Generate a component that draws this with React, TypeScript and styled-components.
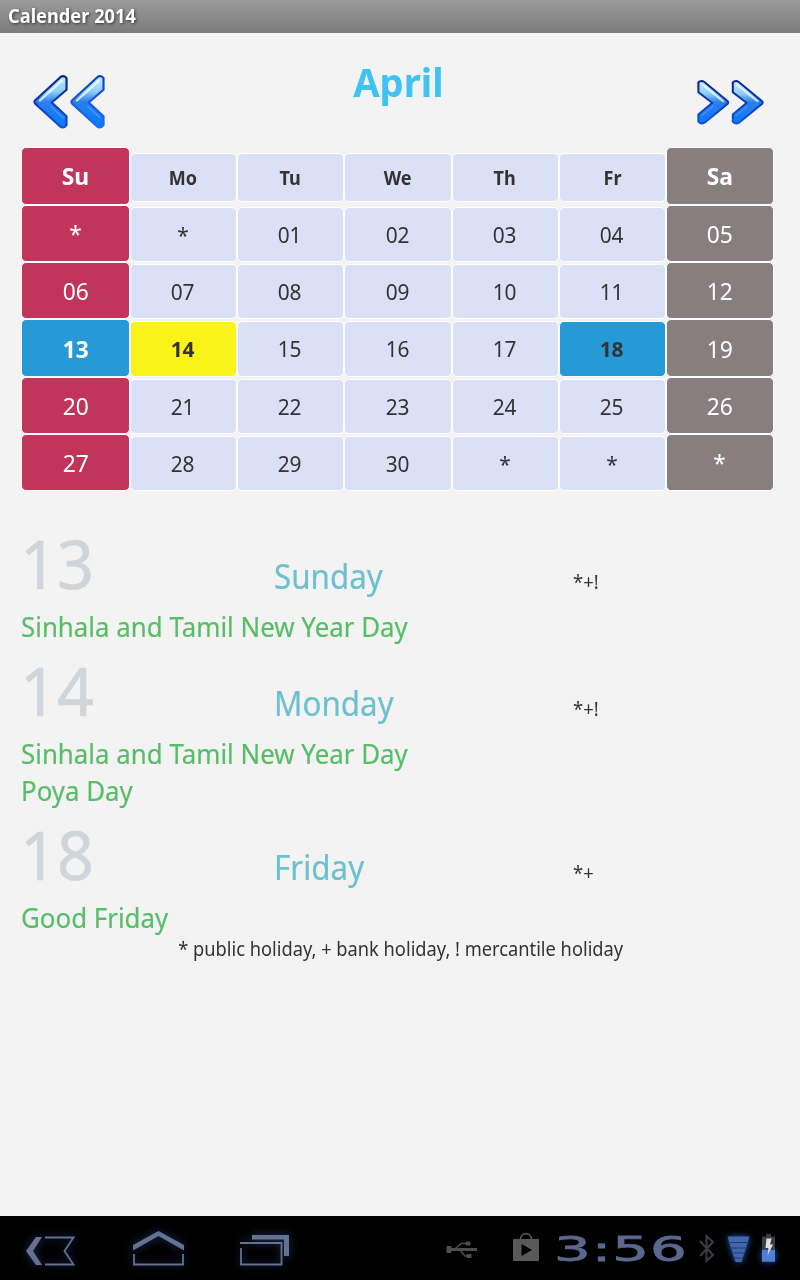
import React from "react";
import styled, { createGlobalStyle } from "styled-components";

const Global = createGlobalStyle`
  * { box-sizing: border-box; }
  body { margin: 0; background: #f3f3f3; font-family: "Noto Sans", "Open Sans", sans-serif; color: #333; }
`;

const Screen = styled.div`
  width: 800px;
  height: 1280px;
  display: flex;
  flex-direction: column;
  background: #f3f3f3;
  overflow: hidden;
`;

const TitleBar = styled.header`
  height: 33px;
  padding-left: 8px;
  line-height: 32px;
  font-size: 19px;
  font-weight: 700;
  color: #fff;
  text-shadow: 1px 1px 3px #333;
  background: linear-gradient(#9b9b9b, #7b7b7b);
`;

const Fit = styled.span<{ $x: number; $origin?: string }>`
  display: inline-block;
  white-space: nowrap;
  transform: scaleX(${(p) => p.$x});
  transform-origin: ${(p) => p.$origin ?? "left"} center;
`;

const MonthBar = styled.div`
  height: 114px;
  padding: 0 35px 0 33px;
  display: grid;
  grid-template-columns: 72px 1fr 68px;
`;

const MonthName = styled.h1`
  margin: 0;
  padding-right: 5px;
  text-align: center;
  font-size: 40px;
  line-height: 97px;
  font-weight: 700;
  color: #3fc3f5;
`;

const ArrowButton = styled.button<{ $top: number }>`
  border: 0;
  padding: ${(p) => p.$top}px 0 0;
  background: none;
  display: flex;
  align-items: flex-start;
`;

const Calendar = styled.div`
  margin-left: 21px;
  display: grid;
  grid-template-columns: 109px 107px 107px 108px 107px 107px 108px;
  grid-template-rows: 58px 57px 57px 58px 57px 57px;
`;

type Tone = "sun" | "week" | "sat" | "holiday" | "today";
const tones: Record<Tone, string> = {
  sun: "#c2355b",
  week: "#dae0f5",
  sat: "#887e80",
  holiday: "#259ad7",
  today: "#f9f31a",
};

const Cell = styled.div<{ $tone: Tone; $edge: boolean; $head: boolean }>`
  display: flex;
  align-items: center;
  justify-content: center;
  margin: ${(p) => (p.$edge ? "0" : p.$head ? "6px 0 3px" : "2px 0 0")};
  padding: ${(p) => (p.$edge ? (p.$head ? "0 0 2px" : "0") : p.$head ? "0 1px 0 0" : "0 1px 2px 0")};
  border: 1px solid #fff;
  border-radius: 5px;
  background: ${(p) => tones[p.$tone]};
  color: ${(p) => (p.$edge ? "#fff" : "#333")};
  font-size: ${(p) => (p.$edge ? 24 : p.$head ? 19 : 22)}px;
  font-weight: ${(p) => (p.$head || p.$tone === "holiday" || p.$tone === "today" ? 700 : 400)};
`;

const Events = styled.main`
  flex: 1;
  padding: 27px 21px 0;
`;

const EventHead = styled.div`
  height: 90px;
  display: grid;
  grid-template-columns: 253px 299px 1fr;
  align-items: baseline;
`;

const DayNumber = styled.span`
  margin-left: -1px;
  font-size: 68px;
  line-height: 90px;
  color: #d0d5da;
  -webkit-text-stroke: 0.7px #d0d5da;
`;

const DayName = styled.span`
  font-size: 34px;
  color: #6dc1cf;
  -webkit-text-stroke: 0.2px #6dc1cf;
`;

const Marks = styled.span`
  font-size: 20px;
`;

const Holiday = styled.div`
  height: 37px;
  line-height: 37px;
  font-size: 28px;
  color: #58bd67;
  -webkit-text-stroke: 0.2px #58bd67;
`;

const Legend = styled.div`
  padding-left: 1px;
  text-align: center;
  font-size: 20px;
  line-height: 26px;
`;

const SystemBar = styled.footer`
  height: 64px;
  background: #000;
  display: flex;
  align-items: center;
`;

const NavIcon = styled.svg`
  width: 107px;
  height: 64px;
  flex: none;
  filter: drop-shadow(0 0 4px #1c3568);
`;

const StatusArea = styled.div`
  margin-left: auto;
  display: flex;
  align-items: center;
  height: 64px;
`;

const StatusIcons = styled.svg`
  height: 64px;
  flex: none;
`;

const Glow = styled.g`
  filter: drop-shadow(0 0 3px #2458b8);
`;

const Clock = styled.div`
  width: 138px;
  margin-left: -2px;
  height: 64px;
  line-height: 66px;
  font-family: "DejaVu Sans", sans-serif;
  font-size: 34px;
  letter-spacing: 0.6px;
  color: #5a688f;
  -webkit-text-stroke: 0.8px #5a688f;
`;

function Chevrons({ dir }: { dir: "prev" | "next" }) {
  const prev = dir === "prev";
  const shape = "M28 2 Q31 0 34 3 V15 L19 28 L34 42 V51 Q31 55 27 52 L2 29 Q1 27 2 26 Z";
  const chevron = (line: string) => (
    <>
      <path d={shape} fill={`url(#fill-${dir})`} stroke={`url(#${line}-${dir})`} strokeWidth="2.2" strokeLinejoin="round" />
      <path d="M29 6 L7 26" stroke="#fff" strokeOpacity=".75" strokeWidth="2.2" strokeLinecap="round" />
      <path d="M18 32 L31 44" stroke="#7fb9ff" strokeOpacity=".5" strokeWidth="1.2" />
    </>
  );
  return (
    <svg width={prev ? 72 : 67} height={prev ? 54 : 45} viewBox="0 0 73 55" preserveAspectRatio="none">
      <defs>
        <linearGradient id={`fill-${dir}`} x1="0" y1="0" x2="0" y2="1">
          <stop offset="0" stopColor="#c8ecff" />
          <stop offset=".3" stopColor="#8fcdfa" />
          <stop offset=".5" stopColor="#2b7fee" />
          <stop offset="1" stopColor="#0878ff" />
        </linearGradient>
        <linearGradient id={`dark-${dir}`} x1="0" y1="0" x2="0" y2="1">
          <stop offset="0" stopColor="#06208c" />
          <stop offset="1" stopColor="#1454d0" />
        </linearGradient>
        <linearGradient id={`light-${dir}`} x1="0" y1="0" x2="0" y2="1">
          <stop offset="0" stopColor="#0d40c0" />
          <stop offset="1" stopColor="#1a70f5" />
        </linearGradient>
      </defs>
      <g transform={prev ? undefined : "translate(73 0) scale(-1 1)"} fill="none">
        {chevron("dark")}
        <g transform="translate(37.5 0)">{chevron(prev ? "light" : "dark")}</g>
      </g>
    </svg>
  );
}

const week = ["Su", "Mo", "Tu", "We", "Th", "Fr", "Sa"];
const days = ["*", "*", ...Array.from({ length: 30 }, (_, i) => String(i + 1).padStart(2, "0")), "*", "*", "*"];

const events = [
  { day: "13", name: "Sunday", marks: "*+!", lines: ["Sinhala and Tamil New Year Day"] },
  { day: "14", name: "Monday", marks: "*+!", lines: ["Sinhala and Tamil New Year Day", "Poya Day"] },
  { day: "18", name: "Friday", marks: "*+", lines: ["Good Friday"] },
];

function toneOf(label: string, col: number): Tone {
  if (label === "13" || label === "18") return "holiday";
  if (label === "14") return "today";
  return col === 0 ? "sun" : col === 6 ? "sat" : "week";
}

function NavIcons() {
  return (
    <>
      <NavIcon viewBox="0 0 107 64" fill="none" stroke="#66718f" strokeWidth="1.8">
        <path d="M36 21h6l-9 14 9 14h-6l-10-14z" fill="#66718f" stroke="none" />
        <path d="M45 21.5h28.500l-9 13.500 9 13.500H45" />
      </NavIcon>
      <NavIcon viewBox="107 0 107 64" fill="none" stroke="#66718f" strokeWidth="1.8">
        <path d="M133 29l25.500-14 25.500 14v5.500L158.500 20 133 34.500z" fill="#66718f" stroke="none" />
        <path d="M134 38v10.500h49V38" />
      </NavIcon>
      <NavIcon viewBox="214 0 107 64" fill="none" stroke="#66718f" strokeWidth="1.8">
        <path d="M252 19h37v21h-5V23.500h-32z" fill="#66718f" stroke="none" />
        <path d="M240 27h41.500v21.500H241V32" />
      </NavIcon>
    </>
  );
}

export default function App() {
  return (
    <Screen>
      <Global />
      <TitleBar><Fit $x={0.96}>Calender 2014</Fit></TitleBar>
      <MonthBar>
        <ArrowButton $top={42} aria-label="Previous month"><Chevrons dir="prev" /></ArrowButton>
        <MonthName><Fit $x={0.955} $origin="center">April</Fit></MonthName>
        <ArrowButton $top={47} aria-label="Next month"><Chevrons dir="next" /></ArrowButton>
      </MonthBar>
      <Calendar>
        {[...week, ...days].map((label, i) => (
          <Cell key={i} $tone={toneOf(label, i % 7)} $edge={i % 7 === 0 || i % 7 === 6} $head={i < 7}>
            <Fit $x={0.95} $origin="center">{label}</Fit>
          </Cell>
        ))}
      </Calendar>
      <Events>
        {events.map((e) => (
          <section key={e.day}>
            <EventHead>
              <DayNumber><Fit $x={0.95}>{e.day}</Fit></DayNumber>
              <DayName><Fit $x={0.922}>{e.name}</Fit></DayName>
              <Marks><Fit $x={0.92}>{e.marks}</Fit></Marks>
            </EventHead>
            {e.lines.map((l) => (
              <Holiday key={l}><Fit $x={0.924}>{l}</Fit></Holiday>
            ))}
          </section>
        ))}
        <Legend><Fit $x={0.913} $origin="center">* public holiday, + bank holiday, ! mercantile holiday</Fit></Legend>
      </Events>
      <SystemBar>
        <NavIcons />
        <StatusArea>
          <StatusIcons width="120" viewBox="436 0 120 64" fill="none">
            <g stroke="#4e4e4e" strokeWidth="2">
              <path d="M448 33.500h29" strokeWidth="3" />
              <path d="M455 33l6-5.500h6M460 34l5 6h5" strokeWidth="1.500" />
              <path d="M447 30.500h4v6h-4zM466 26h4v3h-4zM467 38.500h4v3h-4z" fill="#4e4e4e" strokeWidth="1" />
            </g>
            <path d="M513 23h26v22h-26z" fill="#595959" />
            <path d="M520.500 23c0-7 11-7 11 0" stroke="#595959" strokeWidth="1.500" />
            <path d="M521.500 28v12l10.500-6z" fill="#000" />
          </StatusIcons>
          <Clock><Fit $x={1.7}>3:56</Fit></Clock>
          <StatusIcons width="108" viewBox="692 0 108 64" fill="none">
            <path d="M700 25l13 14-6.500 6V20l6.500 6-13 14" stroke="#383d48" strokeWidth="2" />
            <Glow>
              <path d="M727.500 20.500h22l-8 25.500h-6z" fill="#4268ac" />
              <path d="M728 26.500h21M730 32h17M732 37h13M734 42h9" stroke="#1e3a74" strokeWidth="1" />
            </Glow>
            <path d="M766 18h5v2.500h4V46h-13V20.500h4z" fill="#3b3d42" />
            <Glow><path d="M762 34h13v11.500h-13z" fill="#4d7fd6" /></Glow>
            <path d="M766.500 22.500h5l-1.500 6h3l-5.500 11 1-7.500h-3z" fill="#e0e0e0" />
          </StatusIcons>
        </StatusArea>
      </SystemBar>
    </Screen>
  );
}
